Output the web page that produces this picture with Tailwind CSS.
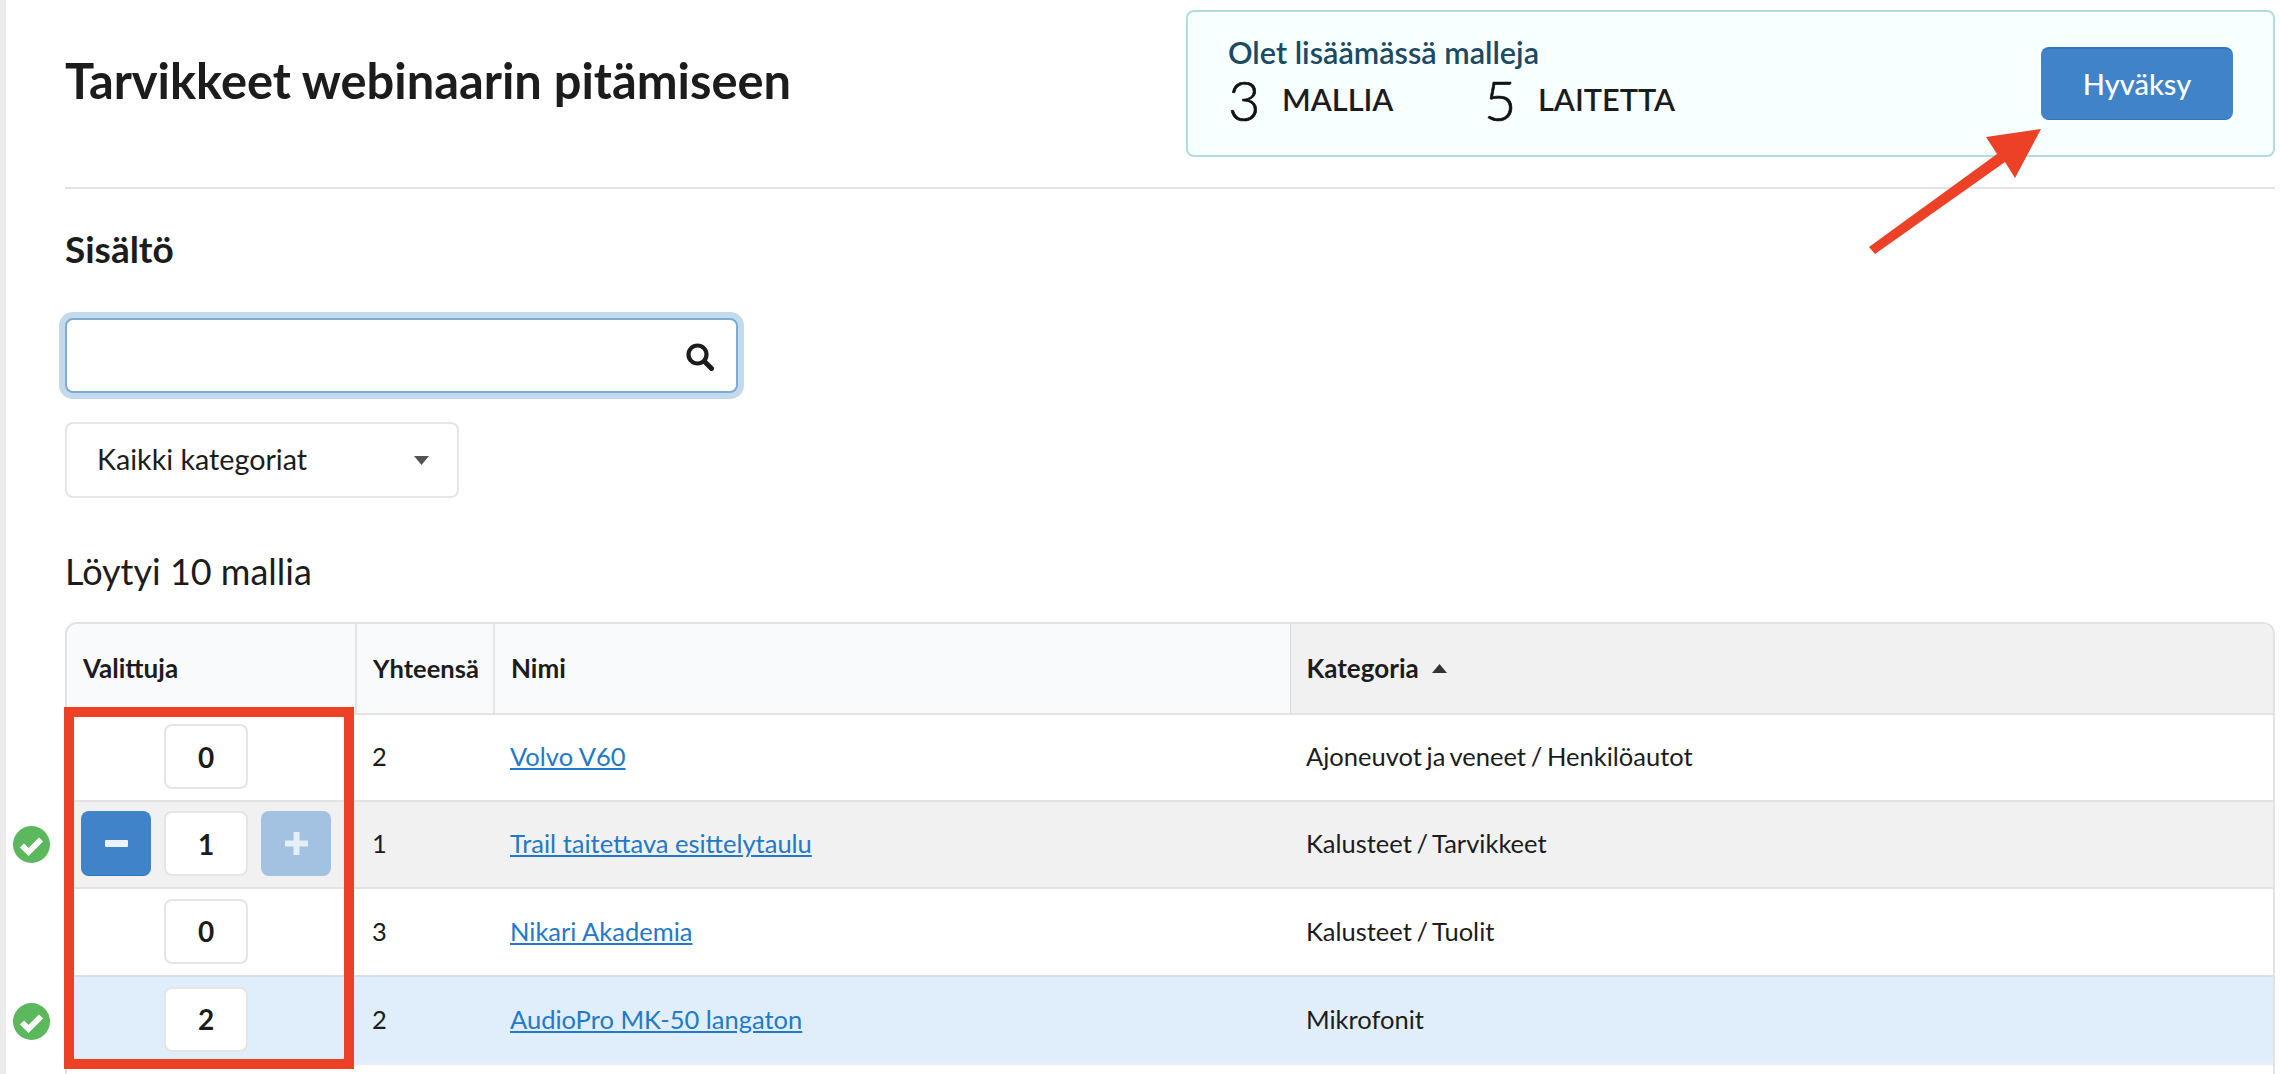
<!DOCTYPE html>
<html lang="en">

<head>
  <meta charset="UTF-8">
  <title>Tarvikkeet webinaarin pitämiseen</title>
  <script src="https://cdn.jsdelivr.net/npm/@tailwindcss/browser@4"></script>
</head>

<body>
  <div class="relative flex h-[1074px] overflow-hidden bg-white font-['Lato',sans-serif] text-[#1c1c1c]">
    <div class="w-[6px] shrink-0 bg-[#ebebeb]"></div>

    <div class="flex min-w-0 flex-1 flex-col pl-[59px] pr-[5px]">
      <!-- header -->
      <div class="relative flex h-[189px] shrink-0 justify-between border-b-2 border-[#e3e3e3]">
        <h1 class="mt-[51px] text-[48.8px] leading-[58px] font-bold">Tarvikkeet webinaarin pitämiseen</h1>
        <div class="mt-[10px] flex h-[147px] w-[1089px] items-center justify-between rounded-lg border-2 border-[#b4dbe4] bg-[#f8ffff] pl-[40px] pr-[40px]">
          <div class="mt-[23px] self-start">
            <div class="text-[30.6px] leading-[36px] font-semibold text-[#1b4a62]">Olet lisäämässä malleja</div>
            <div class="mt-[5px] flex h-[48px] items-center">
              <span class="w-[54px] text-[56px] leading-[48px] font-light text-[#111] [-webkit-text-stroke:0.7px_#111]">3</span>
              <span class="w-[202px] text-[30.7px] leading-[40px] font-semibold">MALLIA</span>
              <span class="w-[54px] text-[56px] leading-[48px] font-light text-[#111] [-webkit-text-stroke:0.7px_#111]">5</span>
              <span class="text-[30.7px] leading-[40px] font-semibold">LAITETTA</span>
            </div>
          </div>
          <button class="h-[73px] w-[192px] rounded-lg border-t-2 border-b border-[#2a78c5] bg-[#4183c9] text-[29px] font-medium text-white">Hyväksy</button>
        </div>
      </div>

      <h2 class="mt-[38px] text-[37px] leading-[44px] font-bold">Sisältö</h2>

      <!-- search -->
      <div class="relative mt-[47px] h-[75px] w-[673px] shrink-0">
        <input type="text" class="h-full w-full rounded-lg border-2 border-[#7fabd3] bg-white px-4 shadow-[0_0_0_6px_#c3d9ec] outline-none">
        <svg class="absolute right-[24px] top-[25px]" width="28" height="28" viewBox="0 0 28 28" fill="none" stroke="#1c1c1c">
          <circle cx="11.5" cy="11.5" r="9" stroke-width="4.2"/>
          <path d="M18.5 18.5 L25.5 25.5" stroke-width="5" stroke-linecap="round"/>
        </svg>
      </div>

      <!-- category select -->
      <div class="mt-[29px] flex h-[76px] w-[394px] shrink-0 items-center justify-between rounded-lg border-2 border-[#e5e5e5] pl-[30px] pr-[28px] text-[28.7px]">
        <span>Kaikki kategoriat</span>
        <svg width="15" height="9" viewBox="0 0 15 9"><path d="M0 0 H15 L7.5 9 Z" fill="#555"/></svg>
      </div>

      <div class="mt-[50px] text-[36px] leading-[46px]">Löytyi 10 mallia</div>

      <!-- table -->
      <div class="mt-[28px] min-h-0 flex-1 rounded-t-xl border-x-2 border-t-2 border-[#e3e3e3]">
        <table class="w-full table-fixed border-collapse text-[25.5px] [&_td]:pb-[2px]">
          <thead>
            <tr class="h-[90px] border-b-2 border-[#e3e3e3] text-left text-[26px] font-bold">
              <th class="w-[289px] rounded-tl-xl border-r-2 border-[#e3e3e3] bg-[#f9fafb] pl-[16px]">Valittuja</th>
              <th class="w-[138px] border-r-2 border-[#e3e3e3] bg-[#f9fafb] pl-[16px] text-[25.5px]">Yhteensä</th>
              <th class="w-[796px] border-r border-[#d9d9d9] bg-[#f9fafb] pl-[16px]">Nimi</th>
              <th class="rounded-tr-xl bg-[#f1f1f1] pl-[16px]">
                <span class="flex items-center gap-[13px]">Kategoria
                  <svg width="15" height="9" viewBox="0 0 15 9"><path d="M0 9 H15 L7.5 0 Z" fill="#333"/></svg>
                </span>
              </th>
            </tr>
          </thead>
          <tbody>
            <tr class="h-[87px] border-b-2 border-[#e3e3e3]">
              <td class="pl-[97px]">
                <div class="flex h-[65px] w-[84px] items-center justify-center rounded-lg border-2 border-[#e5e5e5] bg-white text-[28px] font-bold">0</div>
              </td>
              <td class="pl-[16px]">2</td>
              <td class="pl-[16px]"><a href="#" class="text-[#2279c9] underline">Volvo V60</a></td>
              <td class="pl-[16px] [word-spacing:-1.8px]">Ajoneuvot ja veneet / Henkilöautot</td>
            </tr>
            <tr class="h-[87px] border-b-2 border-[#e3e3e3] bg-[#f1f1f1]">
              <td class="relative pl-[14px]">
                <svg class="absolute left-[-54px] top-[24px]" width="37" height="37" viewBox="0 0 37 37">
                  <circle cx="18.5" cy="18.5" r="18.5" fill="#5cb85c"/>
                  <path d="M9 19.5 L15.5 26 L28 13.5" fill="none" stroke="#fff" stroke-width="5.8"/>
                </svg>
                <div class="flex items-center gap-[13px]">
                  <button class="flex h-[65px] w-[70px] items-center justify-center rounded-lg border-b border-[#2a78c5] bg-[#4183c9]">
                    <span class="h-[7px] w-[23px] rounded-[1px] bg-[#edf3fa]"></span>
                  </button>
                  <div class="flex h-[65px] w-[84px] items-center justify-center rounded-lg border-2 border-[#e5e5e5] bg-white text-[28px] font-bold">1</div>
                  <button class="flex h-[65px] w-[70px] items-center justify-center rounded-lg bg-[#a3c1e0]">
                    <svg width="23" height="23" viewBox="0 0 23 23"><path d="M8.5 0 H14.5 V8.5 H23 V14.5 H14.5 V23 H8.5 V14.5 H0 V8.5 H8.5 Z" fill="#e6eef7"/></svg>
                  </button>
                </div>
              </td>
              <td class="pl-[16px]">1</td>
              <td class="pl-[16px]"><a href="#" class="text-[#2279c9] underline">Trail taitettava esittelytaulu</a></td>
              <td class="pl-[16px] [word-spacing:-1.8px]">Kalusteet / Tarvikkeet</td>
            </tr>
            <tr class="h-[88px] border-b-2 border-[#d8dfe6]">
              <td class="pl-[97px]">
                <div class="flex h-[65px] w-[84px] items-center justify-center rounded-lg border-2 border-[#e5e5e5] bg-white text-[28px] font-bold">0</div>
              </td>
              <td class="pl-[16px]">3</td>
              <td class="pl-[16px]"><a href="#" class="text-[#2279c9] underline">Nikari Akademia</a></td>
              <td class="pl-[16px] [word-spacing:-1.8px]">Kalusteet / Tuolit</td>
            </tr>
            <tr class="h-[88px] border-b-2 border-[#e8eef4] bg-[#e0eefb]">
              <td class="relative pl-[97px]">
                <svg class="absolute left-[-54px] top-[26px]" width="37" height="37" viewBox="0 0 37 37">
                  <circle cx="18.5" cy="18.5" r="18.5" fill="#5cb85c"/>
                  <path d="M9 19.5 L15.5 26 L28 13.5" fill="none" stroke="#fff" stroke-width="5.8"/>
                </svg>
                <div class="flex h-[65px] w-[84px] items-center justify-center rounded-lg border-2 border-[#e5e5e5] bg-white text-[28px] font-bold">2</div>
              </td>
              <td class="pl-[16px]">2</td>
              <td class="pl-[16px]"><a href="#" class="text-[#2279c9] underline">AudioPro MK-50 langaton</a></td>
              <td class="pl-[16px] [word-spacing:-1.8px]">Mikrofonit</td>
            </tr>
          </tbody>
        </table>
      </div>
    </div>

    <!-- annotations drawn over the screenshot -->
    <div class="absolute left-[64px] top-[707px] h-[362px] w-[290px] border-[10px] border-[#ec4027]"></div>
    <svg class="absolute left-0 top-0" width="2280" height="1074" viewBox="0 0 2280 1074">
      <path d="M2041 129 L1986 137 L1997 154 L1869 247 L1875 254 L2005 162 L2015 178 Z" fill="#ec4027"/>
    </svg>
  </div>
</body>

</html>
